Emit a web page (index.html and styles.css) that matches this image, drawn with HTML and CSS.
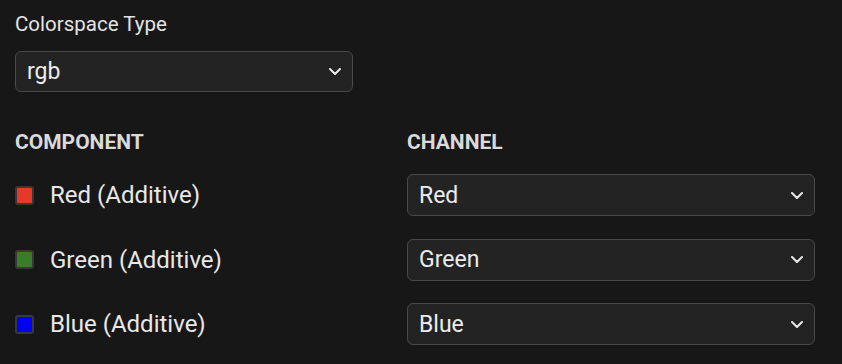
FILE: index.html
```html
<!DOCTYPE html>
<html lang="en">

<head>
    <meta charset="utf-8">
    <meta name="viewport" content="width=device-width, initial-scale=1.0">
    <title>Colorspace</title>
    <link rel="stylesheet" href="styles.css">
</head>

<body>
    <div class="panel">
        <div class="field">
            <label class="field-label">Colorspace Type</label>
            <div class="dropdown dropdown-type">
                <span>rgb</span>
                <svg class="chevron" width="12" height="7" viewBox="0 0 12 7"><path d="M1 1l5 5 5-5" /></svg>
            </div>
        </div>

        <div class="mapping">
            <div class="col-head">COMPONENT</div>
            <div class="col-head">CHANNEL</div>

            <div class="component"><span class="swatch swatch-red"></span>Red (Additive)</div>
            <div class="dropdown">
                <span>Red</span>
                <svg class="chevron" width="12" height="7" viewBox="0 0 12 7"><path d="M1 1l5 5 5-5" /></svg>
            </div>

            <div class="component"><span class="swatch swatch-green"></span>Green (Additive)</div>
            <div class="dropdown">
                <span>Green</span>
                <svg class="chevron" width="12" height="7" viewBox="0 0 12 7"><path d="M1 1l5 5 5-5" /></svg>
            </div>

            <div class="component"><span class="swatch swatch-blue"></span>Blue (Additive)</div>
            <div class="dropdown">
                <span>Blue</span>
                <svg class="chevron" width="12" height="7" viewBox="0 0 12 7"><path d="M1 1l5 5 5-5" /></svg>
            </div>
        </div>
    </div>
</body>

</html>
```

FILE: styles.css
```css
html,
body {
    margin: 0;
    background: #171717;
}

body {
    font-family: Roboto, "Noto Sans", sans-serif;
    color: #e6e6e6;
}

.panel {
    padding: 12px 27px 0 15px;
}

.field-label {
    display: block;
    font-size: 20.5px;
    line-height: 24px;
    color: #e3e3e3;
}

.dropdown {
    box-sizing: border-box;
    height: 42px;
    display: flex;
    align-items: center;
    justify-content: space-between;
    padding: 0 11px 0 11px;
    background: #232323;
    border: 1px solid #494949;
    border-radius: 6px;
    font-size: 23px;
    color: #ececec;
}

.dropdown-type {
    width: 338px;
    height: 41px;
    margin-top: 15px;
}

.chevron {
    display: block;
}

.chevron path {
    fill: none;
    stroke: #e8e8e8;
    stroke-width: 2;
    stroke-linecap: round;
    stroke-linejoin: round;
}

.mapping {
    display: grid;
    grid-template-columns: 392px 408px;
    row-gap: 22.5px;
    margin-top: 38px;
    align-items: center;
}

.col-head {
    font-size: 21px;
    line-height: 24px;
    font-weight: 700;
    color: #dadada;
    margin-bottom: -2.3px;
}

.component {
    display: flex;
    align-items: center;
    gap: 16px;
    font-size: 24px;
    color: #e8e8e8;
}

.swatch {
    box-sizing: border-box;
    width: 19px;
    height: 19px;
    border: 2px solid #383838;
    border-radius: 3px;
}

.swatch-red {
    background: #e5392a;
}

.swatch-green {
    background: #3a7d28;
}

.swatch-blue {
    background: #0000f2;
}
```
